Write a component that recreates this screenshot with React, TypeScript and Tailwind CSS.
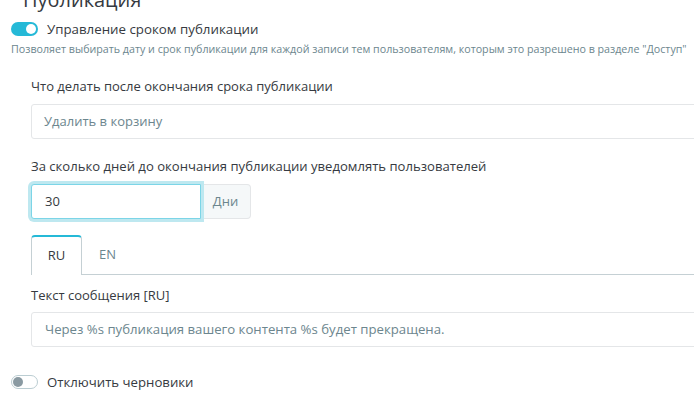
export default function App() {
  return (
    <div
      className="relative w-[694px] h-[403px] overflow-hidden bg-white text-[#363a41]"
      style={{ fontFamily: '"Open Sans", "Noto Sans", sans-serif' }}
    >
      <div className="-mt-[13px] pl-[23px] text-[20px] leading-[26px] text-[#363a41]">Публикация</div>

      <div className="mt-[9px] flex items-center pl-[11px] h-[14px]">
        <span className="relative inline-block w-[27px] h-[14px] rounded-full bg-[#25b9d7]">
          <span className="absolute right-[2px] top-[2px] w-[10px] h-[10px] rounded-full bg-white" />
        </span>
        <span className="ml-[9px] text-[13.3px] leading-[18px]">Управление сроком публикации</span>
      </div>
      <div className="mt-[6px] pl-[11px] text-[10.7px] leading-[15px] text-[#6c868e] whitespace-nowrap">
        Позволяет выбирать дату и срок публикации для каждой записи тем пользователям, которым это разрешено в разделе "Доступ"
      </div>

      <div className="pl-[31px]">
        <div className="mt-[20px] text-[13px] leading-[18px]">Что делать после окончания срока публикации</div>
        <div className="mt-[9px] h-[35px] w-[700px] border border-[#e4e6e8] rounded-[3px] flex items-center pl-[12px] text-[13px] text-[#6c868e]">
          Удалить в корзину
        </div>

        <div className="mt-[18px] text-[13.1px] leading-[18px]">За сколько дней до окончания публикации уведомлять пользователей</div>
        <div className="mt-[9px] flex h-[35px] ">
          <div className="w-[170px] h-[35px] border border-[#7cd5e7] rounded-l-[3px] shadow-[0_0_0_3px_#bee8f0] flex items-center pl-[13px] text-[13px] relative z-10 bg-white">
            30
          </div>
          <div className="w-[50px] h-[35px] border border-l-0 border-[#e4e6e8] bg-[#f5f8f9] rounded-r-[4px] flex items-center justify-center text-[13px] text-[#6c868e]">
            Дни
          </div>
        </div>

        <div className="mt-[16px] flex h-[40px] border-b border-[#c5d0d4]">
          <div className="w-[51px] h-[40px] -mb-px border border-b-0 border-[#c5d0d4] border-t-2 border-t-[#25b9d7] rounded-t-[4px] bg-white flex items-center justify-center text-[13px]">
            RU
          </div>
          <div className="w-[51px] flex items-center justify-center text-[13px] text-[#6c868e]">EN</div>
        </div>

        <div className="mt-[11px] text-[13px] leading-[18px]">Текст сообщения [RU]</div>
        <div className="mt-[8px] h-[35px] w-[700px] border border-[#e4e6e8] rounded-[3px] flex items-center pl-[13px] text-[13.2px] text-[#6c868e]">
          Через %s публикация вашего контента %s будет прекращена.
        </div>
      </div>

      <div className="mt-[28px] flex items-center pl-[11px] h-[14px]">
        <span className="relative inline-block w-[27px] h-[14px] rounded-full border border-[#bbcdd2] bg-white">
          <span className="absolute left-[1px] top-[1px] w-[10px] h-[10px] rounded-full bg-[#8a9aa2]" />
        </span>
        <span className="ml-[9px] text-[13.2px] leading-[18px]">Отключить черновики</span>
      </div>
    </div>
  );
}
